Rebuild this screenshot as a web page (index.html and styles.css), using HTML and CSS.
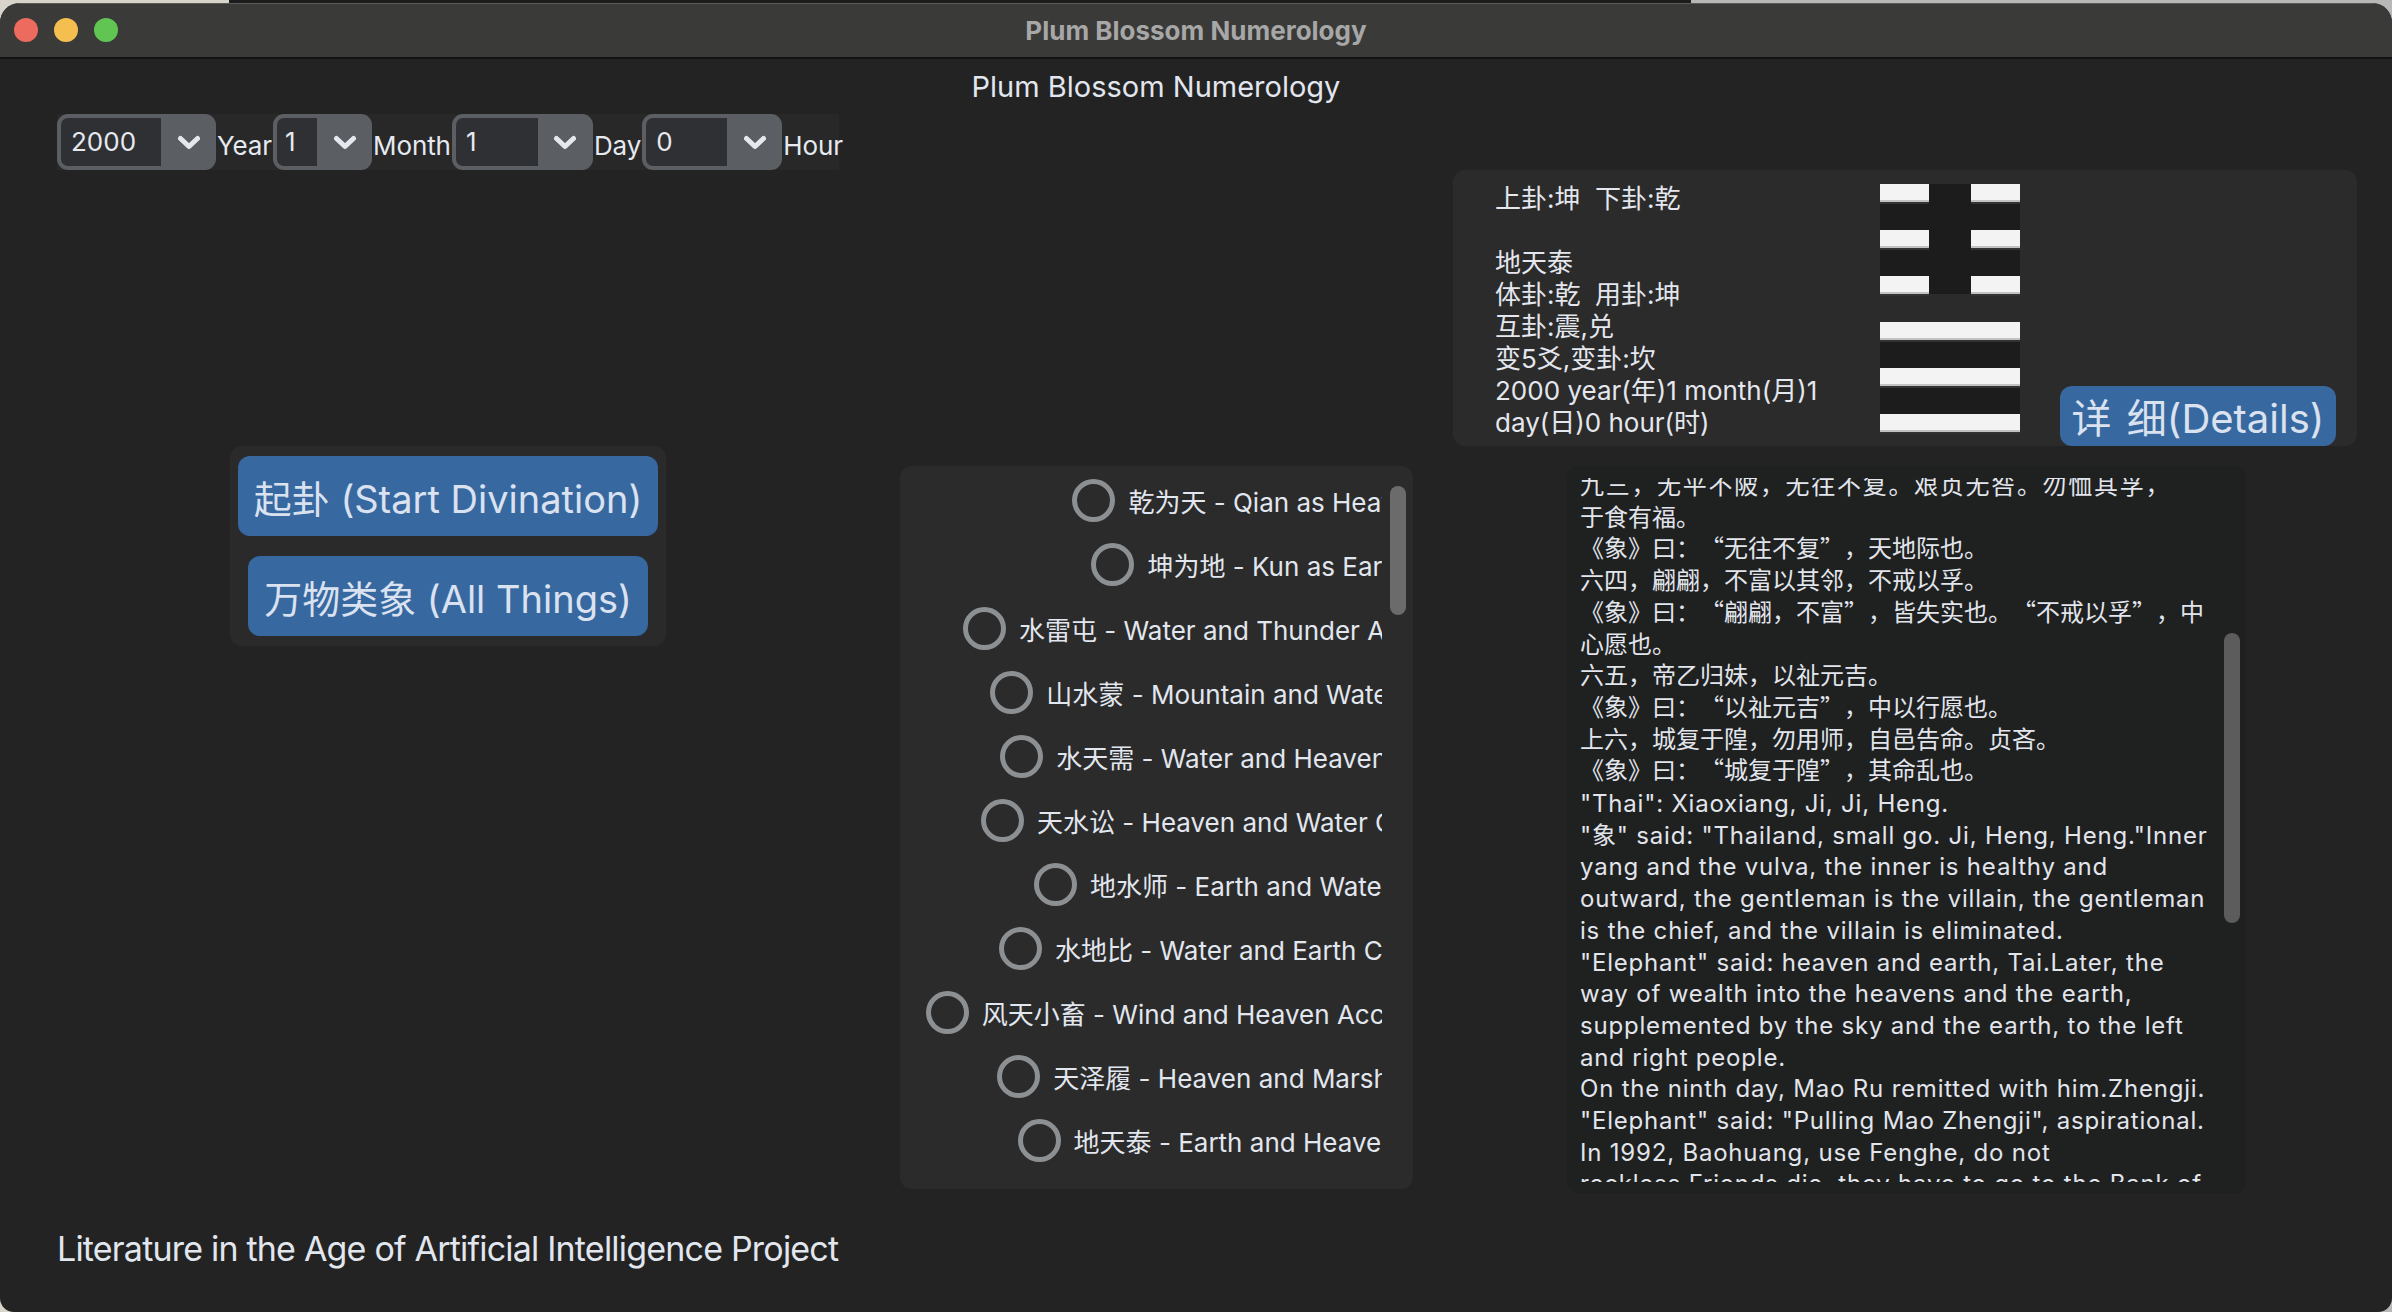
FILE: index.html
```html
<!DOCTYPE html>
<html lang="zh">
<head>
<meta charset="utf-8">
<title>Plum Blossom Numerology</title>
<link rel="stylesheet" href="styles.css">
</head>
<body>
<div class="window">
  <div class="titlebar">
    <div class="lights">
      <span class="light red"></span>
      <span class="light yellow"></span>
      <span class="light green"></span>
    </div>
    <div class="title">Plum Blossom Numerology</div>
    <div></div>
  </div>

  <div class="content">
    <h1 class="heading">Plum Blossom Numerology</h1>

    <div class="daterow">
      <div class="combo">
        <div class="field field-year">2000</div>
        <div class="arrow"><svg width="24" height="15" viewBox="0 0 24 15"><path d="M3.5 3.5 L12 11.5 L20.5 3.5" fill="none" stroke="#e6e8ef" stroke-width="5" stroke-linecap="round" stroke-linejoin="round"/></svg></div>
      </div>
      <span class="dlabel">Year</span>
      <div class="combo">
        <div class="field field-month">1</div>
        <div class="arrow"><svg width="24" height="15" viewBox="0 0 24 15"><path d="M3.5 3.5 L12 11.5 L20.5 3.5" fill="none" stroke="#e6e8ef" stroke-width="5" stroke-linecap="round" stroke-linejoin="round"/></svg></div>
      </div>
      <span class="dlabel">Month</span>
      <div class="combo">
        <div class="field field-day">1</div>
        <div class="arrow"><svg width="24" height="15" viewBox="0 0 24 15"><path d="M3.5 3.5 L12 11.5 L20.5 3.5" fill="none" stroke="#e6e8ef" stroke-width="5" stroke-linecap="round" stroke-linejoin="round"/></svg></div>
      </div>
      <span class="dlabel">Day</span>
      <div class="combo">
        <div class="field field-hour">0</div>
        <div class="arrow"><svg width="24" height="15" viewBox="0 0 24 15"><path d="M3.5 3.5 L12 11.5 L20.5 3.5" fill="none" stroke="#e6e8ef" stroke-width="5" stroke-linecap="round" stroke-linejoin="round"/></svg></div>
      </div>
      <span class="dlabel">Hour</span>
    </div>

    <div class="inforow">
      <div class="infopanel">
        <div class="infotext">上卦:坤  下卦:乾

地天泰
体卦:乾  用卦:坤
互卦:震,兑
变5爻,变卦:坎
2000 year(年)1 month(月)1
day(日)0 hour(时)</div>
        <div class="hexagram">
          <div class="trigram">
            <div class="bar broken"><i></i><i></i></div>
            <div class="bar broken"><i></i><i></i></div>
            <div class="bar broken"><i></i><i></i></div>
          </div>
          <div class="trigram">
            <div class="bar solid"></div>
            <div class="bar solid"></div>
            <div class="bar solid"></div>
          </div>
        </div>
        <button class="details">详 细(Details)</button>
      </div>
    </div>

    <div class="midrow">
      <div class="actions">
        <button class="btn">起卦 (Start Divination)</button>
        <button class="btn">万物类象 (All Things)</button>
      </div>

      <div class="listpanel">
        <div class="listview">
          <div class="listinner">
            <label class="opt"><span class="radio"></span><span>乾为天 - Qian as Heaven</span></label>
            <label class="opt"><span class="radio"></span><span>坤为地 - Kun as Earth</span></label>
            <label class="opt"><span class="radio"></span><span>水雷屯 - Water and Thunder Accumulation</span></label>
            <label class="opt"><span class="radio"></span><span>山水蒙 - Mountain and Water Ignorant</span></label>
            <label class="opt"><span class="radio"></span><span>水天需 - Water and Heaven Needing</span></label>
            <label class="opt"><span class="radio"></span><span>天水讼 - Heaven and Water Contention.</span></label>
            <label class="opt"><span class="radio"></span><span>地水师 - Earth and Water Army</span></label>
            <label class="opt"><span class="radio"></span><span>水地比 - Water and Earth Closeness.</span></label>
            <label class="opt"><span class="radio"></span><span>风天小畜 - Wind and Heaven Accumulated Small</span></label>
            <label class="opt"><span class="radio"></span><span>天泽履 - Heaven and Marsh Conduct</span></label>
            <label class="opt"><span class="radio"></span><span>地天泰 - Earth and Heaven Peace</span></label>
          </div>
        </div>
        <div class="thumb list-thumb"></div>
      </div>

      <div class="textpanel">
        <div class="textview">
          <div class="textcontent">
            <p class="zh"><span class="wide">九三，无平不陂，无往不复。艰贞无咎。勿恤其孚，</span><br>于食有福。</p>
            <p class="zh">《象》曰：<span class="qo">“</span>无往不复<span class="qc">”</span>，天地际也。</p>
            <p class="zh">六四，翩翩，不富以其邻，不戒以孚。</p>
            <p class="zh">《象》曰：<span class="qo">“</span>翩翩，不富<span class="qc">”</span>，皆失实也。<span class="qo">“</span>不戒以孚<span class="qc">”</span>，中<br>心愿也。</p>
            <p class="zh">六五，帝乙归妹，以祉元吉。</p>
            <p class="zh">《象》曰：<span class="qo">“</span>以祉元吉<span class="qc">”</span>，中以行愿也。</p>
            <p class="zh">上六，城复于隍，勿用师，自邑告命。贞吝。</p>
            <p class="zh">《象》曰：<span class="qo">“</span>城复于隍<span class="qc">”</span>，其命乱也。</p>
            <p class="en first-en">"Thai": Xiaoxiang, Ji, Ji, Heng.</p>
            <p class="en">"象" said: "Thailand, small go. Ji, Heng, Heng."Inner<br>yang and the vulva, the inner is healthy and<br>outward, the gentleman is the villain, the gentleman<br>is the chief, and the villain is eliminated.</p>
            <p class="en">"Elephant" said: heaven and earth, Tai.Later, the<br>way of wealth into the heavens and the earth,<br>supplemented by the sky and the earth, to the left<br>and right people.</p>
            <p class="en">On the ninth day, Mao Ru remitted with him.Zhengji.</p>
            <p class="en">"Elephant" said: "Pulling Mao Zhengji", aspirational.</p>
            <p class="en">In 1992, Baohuang, use Fenghe, do not<br>reckless.Friends die, they have to go to the Bank of</p>
          </div>
        </div>
        <div class="thumb text-thumb"></div>
      </div>
    </div>

    <div class="footer">Literature in the Age of Artificial Intelligence Project</div>
  </div>
</div>
</body>
</html>
```

FILE: styles.css
```css
html, body {
  margin: 0;
  padding: 0;
}

body {
  width: 2392px;
  height: 1312px;
  overflow: hidden;
  background: linear-gradient(to right, #d8d4cc 0 229px, #1c1c1c 229px 1691px, #b8b8b8 1691px);
  font-family: "Inter", "Noto Sans CJK SC", sans-serif;
  color: #dfe3eb;
}

.window {
  margin-top: 3px;
  height: 1309px;
  background: #232323;
  border-radius: 20px 20px 14px 14px;
  overflow: hidden;
  display: flex;
  flex-direction: column;
}

/* ---------- title bar ---------- */
.titlebar {
  height: 54px;
  flex: none;
  background: #3a3a38;
  border-bottom: 2px solid #121212;
  box-shadow: inset 0 1px 0 #5a5a58;
  display: grid;
  grid-template-columns: 1fr auto 1fr;
  align-items: center;
  padding: 0 14px;
}

.lights {
  display: flex;
  gap: 16px;
}

.light {
  width: 24px;
  height: 24px;
  border-radius: 50%;
}

.red { background: #ec6a5e; }
.yellow { background: #f4bf4f; }
.green { background: #61c554; }

.title {
  font-size: 26px;
  font-weight: 700;
  color: #a7a7a7;
}

/* ---------- content ---------- */
.content {
  flex: 1;
  display: flex;
  flex-direction: column;
}

.heading {
  margin: 0;
  height: 55px;
  line-height: 55px;
  font-size: 29px;
  font-weight: 400;
  text-align: center;
  padding-right: 80px;
  color: #e2e6ee;
}

/* date row */
.daterow {
  display: flex;
  align-items: stretch;
  height: 56px;
  margin-left: 57px;
  width: 782px;
  background: #282828;
}

.combo {
  display: flex;
  background: #5b5e62;
  border-radius: 11px;
  padding: 4px 0 4px 4px;
}

.field {
  background: #2f3033;
  border-radius: 7px 0 0 7px;
  font-size: 26px;
  line-height: 48px;
  padding-left: 10px;
  box-sizing: border-box;
  color: #e6e9f0;
}

.field-year { width: 100px; }
.field-month { width: 40px; padding-left: 8px; }
.field-day { width: 82px; }
.field-hour { width: 81px; }

.arrow {
  width: 55px;
  display: flex;
  align-items: center;
  justify-content: center;
}

.dlabel {
  font-size: 26px;
  line-height: 56px;
  padding: 4px 1px 0 1px;
  box-sizing: border-box;
  color: #e6e9f0;
  letter-spacing: -0.1px;
}

/* info row */
.inforow {
  display: flex;
  justify-content: flex-end;
  padding-right: 35px;
  height: 276px;
}

.infopanel {
  width: 904px;
  height: 276px;
  box-sizing: border-box;
  background: #2b2b2b;
  border-radius: 12px;
  display: flex;
  align-items: flex-start;
  padding: 13px 21px 0 42px;
  overflow: hidden;
}

.infotext {
  width: 385px;
  flex: none;
  font-size: 26px;
  line-height: 32px;
  white-space: pre;
  color: #e4e7ee;
}

.hexagram {
  width: 140px;
  flex: none;
  margin-top: 1px;
  display: flex;
  flex-direction: column;
  gap: 28px;
}

.trigram {
  height: 110px;
  background: #1c1c1c;
  display: flex;
  flex-direction: column;
  justify-content: space-between;
}

.bar {
  height: 18px;
  display: flex;
  justify-content: space-between;
}

.bar.solid,
.bar.broken i {
  background: #f3f3f3;
  box-shadow: inset 0 -2px 0 #c2c2c2, 0 2px 0 #333;
}

.bar.broken i {
  width: 49px;
}

.details {
  margin-left: auto;
  align-self: flex-end;
  width: 276px;
  height: 60px;
  border: none;
  border-radius: 12px;
  background: #3868a0;
  color: #dae2f0;
  font-family: inherit;
  font-size: 40px;
  padding: 0;
  word-spacing: 4px;
}

/* mid row */
.midrow {
  display: flex;
  align-items: flex-start;
  padding-left: 230px;
  height: 747px;
}

.actions {
  width: 436px;
  box-sizing: border-box;
  padding: 10px;
  background: #2a2a2a;
  border-radius: 12px;
  display: flex;
  flex-direction: column;
  align-items: center;
  gap: 20px;
}

.btn {
  height: 80px;
  padding: 0 16px;
  border: none;
  border-radius: 12px;
  background: #3868a0;
  color: #dae2f0;
  font-family: inherit;
  font-size: 38px;
  white-space: nowrap;
}

.listpanel {
  position: relative;
  margin-left: 234px;
  margin-top: 20px;
  width: 513px;
  height: 723px;
  box-sizing: border-box;
  padding-top: 2px;
  background: #2b2b2b;
  border-radius: 12px;
}

.listview {
  width: 480px;
  height: 706px;
  margin-left: 2px;
  overflow: hidden;
}

.listinner {
  width: 694px;
}

.opt {
  height: 64px;
  display: flex;
  align-items: center;
  justify-content: center;
  gap: 13px;
  white-space: nowrap;
  font-size: 26px;
  color: #e2e6ee;
}

.radio {
  width: 43px;
  height: 43px;
  flex: none;
  box-sizing: border-box;
  border: 5px solid #8d9093;
  border-radius: 50%;
}

.thumb {
  position: absolute;
  width: 16px;
  border-radius: 8px;
}

.list-thumb {
  right: 7px;
  top: 20px;
  height: 129px;
  background: #6b6b6b;
}

.textpanel {
  position: relative;
  margin-left: 154px;
  margin-top: 20px;
  width: 679px;
  height: 727px;
  box-sizing: border-box;
  padding: 12px 0 0 13px;
  background: #1f2020;
  border-radius: 12px;
}

.textview {
  width: 640px;
  height: 704px;
  overflow: hidden;
}

.textcontent {
  margin-top: -10px;
  font-size: 24px;
  line-height: 31.7px;
  white-space: nowrap;
  color: #e2e5ec;
}

.textcontent p {
  margin: 0;
}

.textcontent .zh {
  font-family: "Noto Sans CJK SC", sans-serif;
}

.textcontent .wide {
  letter-spacing: 1.7px;
}

.textcontent .qo,
.textcontent .qc {
  display: inline-block;
  width: 1em;
}

.textcontent .qo {
  text-align: right;
}

.textcontent .qc {
  text-align: left;
}

.textcontent .en {
  letter-spacing: 0.8px;
}

.textcontent .first-en {
  margin-top: 3px;
}

.text-thumb {
  right: 6px;
  top: 167px;
  height: 290px;
  background: #5c5c5c;
}

.footer {
  padding: 34px 0 0 57px;
  font-size: 34px;
  line-height: 44px;
  letter-spacing: -0.8px;
  color: #e2e6ee;
}
```
